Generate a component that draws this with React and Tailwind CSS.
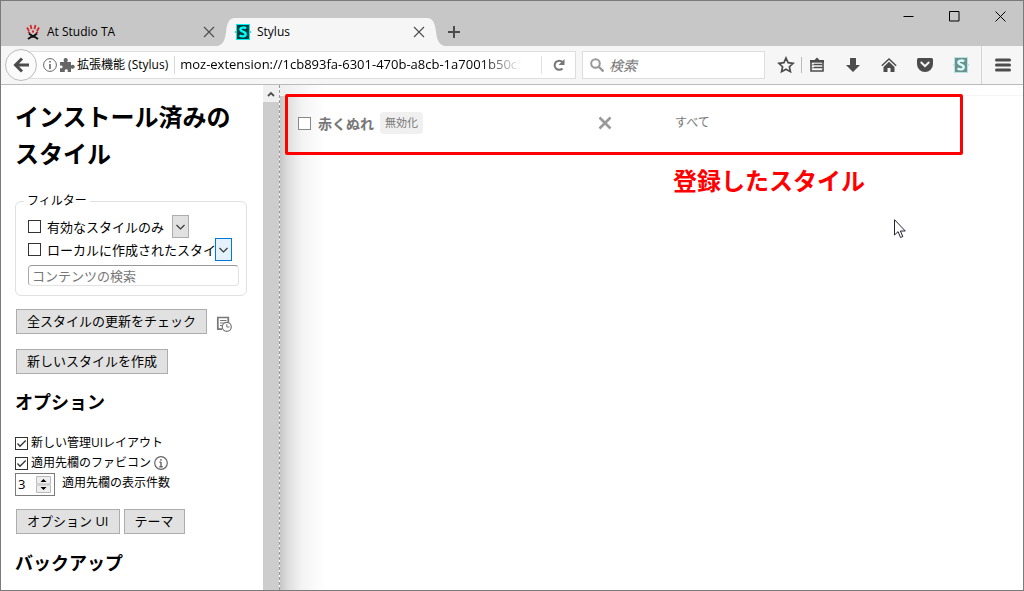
import React, { useState } from 'react'

const ICON = 'fill-none stroke-[#4c4c4c]'

const Tick = ({ id, checked, onChange, className = 'border-[#333]' }) => (
  <span className="grid shrink-0">
    <input
      id={id}
      type="checkbox"
      checked={checked}
      onChange={onChange}
      className={`col-start-1 row-start-1 size-[13px] appearance-none border bg-white ${className}`}
    />
    {checked && (
      <svg viewBox="0 0 13 13" className="pointer-events-none col-start-1 row-start-1 size-[13px] fill-none stroke-[#333]">
        <path d="M2.5 6.5 5 9.2 10.7 3.5" strokeWidth="1.3" />
      </svg>
    )}
  </span>
)

const MiniSelect = ({ label, options, className }) => (
  <span className="grid shrink-0">
    <select aria-label={label} className={`col-start-1 row-start-1 h-[23px] w-[17px] appearance-none border text-transparent ${className}`}>
      {options.map((o) => (
        <option key={o}>{o}</option>
      ))}
    </select>
    <svg viewBox="0 0 17 23" className="pointer-events-none col-start-1 row-start-1 h-[23px] w-[17px] fill-none stroke-[#333]">
      <path d="m4.5 10 4 4 4-4" strokeWidth="1.1" />
    </svg>
  </span>
)

const PushButton = ({ children }) => (
  <button type="button" className="h-[25px] border border-[#adadad] bg-[#e1e1e1] px-2.5 text-[13px] leading-[23px] whitespace-nowrap">
    {children}
  </button>
)

const StylusLogo = ({ faded }) => (
  <svg viewBox="0 0 16 16" className="size-4 shrink-0">
    <rect x="1" width="14" height="16" fill={faded ? '#b5e3df' : '#00efef'} />
    <path d="M0 7h16v2H0z" fill={faded ? '#b5e3df' : '#00efef'} />
    <rect x="2" y="1" width="12" height="14" fill={faded ? '#6f9290' : '#063c3c'} />
    <path
      d="M11 4.6C10 3.4 5.5 2.8 5.4 5.4 5.3 8 10.8 7.3 10.7 10.2 10.6 13 6 12.8 4.7 11.3"
      fill="none"
      stroke={faded ? '#d8fffb' : '#00ffff'}
      strokeWidth="2.4"
    />
  </svg>
)

const CloseIcon = () => (
  <svg viewBox="0 0 12 12" className="size-3 fill-none stroke-[#4c4c4c]">
    <path d="m1 1 10 10M11 1 1 11" strokeWidth="1.1" />
  </svg>
)

const TabStrip = () => (
  <div className="flex h-[45px] shrink-0 items-start justify-between bg-[#c7c7c7]">
    <div className="flex pt-[17px]">
      <div className="flex h-7 w-[216px] items-center pl-6">
        <svg viewBox="0 0 16 16" className="size-4 shrink-0 fill-none">
          <path d="M2 3.5 4 7M5.5 1 6.5 5M10.5 1 9.5 5M14 3.5 12 7M7 7.5h2M3 8l2 1M13 8l-2 1" stroke="#d3262b" strokeWidth="1.8" />
          <path d="m3 15 3-2 2-1 2 1 3 2M4 9.5l4 3 4-3" stroke="#111" strokeWidth="2" />
        </svg>
        <span className="ml-1.5 flex-1 text-[12px]">At Studio TA</span>
        <button type="button" aria-label="Close At Studio TA" className="pr-0.5">
          <CloseIcon />
        </button>
      </div>
      <div className="flex h-7">
        <svg viewBox="0 0 18 28" className="h-7 w-[18px] fill-[#f6f6f6]">
          <path d="M0 28C6 27 8 22 9 14 10 5 12 0 18 0V28Z" />
        </svg>
        <div className="flex w-[192px] items-center bg-[#f6f6f6]">
          <StylusLogo />
          <span className="ml-1.5 flex-1 text-[12px]">Stylus</span>
          <button type="button" aria-label="Close Stylus" className="pr-0.5">
            <CloseIcon />
          </button>
        </div>
        <svg viewBox="0 0 18 28" className="h-7 w-[18px] fill-[#f6f6f6]">
          <path d="M18 28C12 27 10 22 9 14 8 5 6 0 0 0V28Z" />
        </svg>
      </div>
      <button type="button" aria-label="New tab" className="ml-[3px]">
        <svg viewBox="0 0 12 12" className="size-3 fill-none stroke-[#4c4c4c]">
          <path d="M6 0v12M0 6h12" strokeWidth="2" />
        </svg>
      </button>
    </div>
    <div className="flex h-[30px] items-center gap-[35px] pr-[17px]">
      <button type="button" aria-label="Minimize">
        <svg viewBox="0 0 11 11" className="size-[11px] fill-none stroke-black"><path d="M.5 5.5h10" /></svg>
      </button>
      <button type="button" aria-label="Maximize">
        <svg viewBox="0 0 11 11" className="size-[11px] fill-none stroke-black"><path d="M.5.5h9.5v9.5H.5V.5z" /></svg>
      </button>
      <button type="button" aria-label="Close window">
        <svg viewBox="0 0 11 11" className="size-[11px] fill-none stroke-black"><path d="m.5.5 10 10M10.5.5l-10 10" /></svg>
      </button>
    </div>
  </div>
)

const NavBar = () => (
  <div className="flex h-[39px] shrink-0 items-center border-b border-[#bbb] bg-[#f6f6f6]">
    <button type="button" aria-label="Back" className="z-10 ml-1 grid size-8 shrink-0 place-items-center rounded-full border border-[#bbb] bg-[#fbfbfb]">
      <svg viewBox="0 0 16 16" className="size-4 fill-none stroke-[#4c4c4c]">
        <path d="M9 1.5 2.5 8 9 14.5M3 8h13" strokeWidth="3" />
      </svg>
    </button>
    <div className="-ml-2.5 flex h-7 min-w-0 flex-1 items-center border border-[#dedede] bg-white pl-[15px]">
      <svg viewBox="0 0 14 14" className="size-3.5 shrink-0 fill-none stroke-[#666]">
        <circle cx="7" cy="7" r="6.4" />
        <path d="M7 6v5M7 3v1.6" strokeWidth="1.6" />
      </svg>
      <svg viewBox="0 0 16 16" className="ml-0.5 size-4 shrink-0 fill-[#666]">
        <path d="M1 5h4.2C4 3 4.8 1 6.7 1S9.400 3 8.200 5H12v3.300c2-1.200 3.700-.4 3.700 1.400S14 12.300 12 11.200V15H8.500c.8-1.800.2-2.800-1.200-2.800S5.200 13.200 6 15H1v-4c1.600.8 2.600.1 2.600-1.100S2.500 7.900 1 8.700Z" />
      </svg>
      <span className="ml-0.5 shrink-0 text-[12px] whitespace-nowrap">拡張機能 (Stylus)</span>
      <span className="ml-1.5 h-[18px] w-px shrink-0 bg-[#d8d8d8]" />
      <input
        aria-label="URL"
        defaultValue="moz-extension://1cb893fa-6301-470b-a8cb-1a7001b50c5e/manage.html"
        className="ml-[5px] min-w-0 flex-1 bg-transparent text-[13px] [mask-image:linear-gradient(to_right,#000_calc(100%-40px),transparent)]"
      />
      <span className="ml-5 h-[18px] w-px shrink-0 bg-[#dedede]" />
      <button type="button" aria-label="Reload" className="grid w-[33px] shrink-0 place-items-center">
        <svg viewBox="0 0 14 14" className="size-3.5 fill-none stroke-[#777]">
          <path d="M10.500 10.500A4.600 4.600 0 1 1 10.500 4" strokeWidth="2" />
          <path d="M12.500 1v6H6.500Z" className="fill-[#777] stroke-none" />
        </svg>
      </button>
    </div>
    <div className="ml-1.5 flex h-7 w-[183px] shrink-0 items-center border border-[#dedede] bg-white pl-[7px]">
      <svg viewBox="0 0 14 14" className="size-3.5 shrink-0 fill-none stroke-[#999]">
        <circle cx="5.500" cy="5.500" r="4.300" strokeWidth="2" />
        <path d="m8.500 8.500 5 5" strokeWidth="2.400" />
      </svg>
      <input aria-label="Search" placeholder="検索" className="ml-[5px] w-full min-w-0 text-[14px] italic placeholder:text-[#777]" />
    </div>
    <div className="flex shrink-0 items-center pl-3">
      <button type="button" aria-label="Bookmark">
        <svg viewBox="0 0 18 18" className={`size-[18px] ${ICON}`}>
          <path d="m9 2 2.100 4.700 5 .6-3.700 3.400 1 5L9 13.200l-4.400 2.500 1-5L1.900 7.300l5-.6Z" strokeWidth="1.700" />
        </svg>
      </button>
      <span className="ml-1.5 h-4 w-px bg-[#bbb]" />
      <button type="button" aria-label="Bookmarks menu" className="ml-[7px]">
        <svg viewBox="0 0 16 16" className={`size-4 ${ICON}`}>
          <path d="M2 4.500h12V14H2zM5 7.500h8M5 10.500h8" strokeWidth="1.600" />
          <path d="M1 3h4.500L8 .5 10.500 3H15v2.500H1zM3.500 7h1v1.500h-1zm0 3h1v1.500h-1z" className="fill-[#4c4c4c] stroke-none" />
        </svg>
      </button>
      <button type="button" aria-label="Downloads" className="ml-5">
        <svg viewBox="0 0 16 16" className="size-4 fill-[#4c4c4c]"><path d="M5 1.500Q5 1 5.500 1h5q.5 0 .5.5V8h4L8 15 1 8h4Z" /></svg>
      </button>
      <button type="button" aria-label="Home" className="ml-5">
        <svg viewBox="0 0 16 16" className="size-4 fill-[#4c4c4c]">
          <path d="M8 4.800 13.500 10v5H9.500v-4h-3v4h-4v-5Z" />
          <path d="M.8 8.800 8 2l7.200 6.800" className={ICON} strokeWidth="1.500" />
        </svg>
      </button>
      <button type="button" aria-label="Pocket" className="ml-5">
        <svg viewBox="0 0 16 16" className="size-4 fill-[#4c4c4c]">
          <path d="M1.500 1h13q1.500 0 1.500 1.500V7a8 8 0 0 1-16 0V2.500Q0 1 1.500 1Z" />
          <path d="m4.300 5.500 3.700 3.700 3.700-3.700" className="fill-none stroke-[#f6f6f6]" strokeWidth="2" strokeLinecap="round" />
        </svg>
      </button>
      <button type="button" aria-label="Stylus" className="ml-5">
        <StylusLogo faded />
      </button>
      <span className="ml-3 h-[38px] w-px bg-[#d4d4d4]" />
      <button type="button" aria-label="Menu" className="mr-3 ml-[13px]">
        <svg viewBox="0 0 16 14" className={`h-3.5 w-4 ${ICON}`}>
          <path d="M1.500 2h13M1.500 7h13M1.500 12h13" strokeWidth="3" strokeLinecap="round" />
        </svg>
      </button>
    </div>
  </div>
)

const Sidebar = () => {
  const [enabledOnly, setEnabledOnly] = useState(false)
  const [localOnly, setLocalOnly] = useState(false)
  const [newLayout, setNewLayout] = useState(true)
  const [favicons, setFavicons] = useState(true)

  return (
    <aside className="w-[262px] shrink-0 overflow-hidden px-3.5 pt-[13px]">
      <h1 className="text-[24px] leading-[37px] font-bold">インストール済みのスタイル</h1>

      <fieldset className="mt-5 mr-0.5 rounded-md border border-[#e0e0e0] pr-[7px] pb-[9px] pl-3">
        <legend className="-ml-1 px-[3px] text-[12px] leading-[18px]">フィルター</legend>
        <div className="mt-[5px] flex h-[23px] items-center">
          <Tick id="enabled" checked={enabledOnly} onChange={(e) => setEnabledOnly(e.target.checked)} />
          <label htmlFor="enabled" className="ml-1.5 w-[125px] text-[13px] leading-5 whitespace-nowrap">有効なスタイルのみ</label>
          <MiniSelect label="有効状態" options={['有効なスタイルのみ', '無効なスタイルのみ']} className="border-[#adadad] bg-[#e1e1e1]" />
        </div>
        <div className="flex h-[23px] items-center">
          <Tick id="local" checked={localOnly} onChange={(e) => setLocalOnly(e.target.checked)} />
          <label htmlFor="local" className="ml-1.5 w-[168px] overflow-hidden text-[13px] leading-5 whitespace-nowrap">ローカルに作成されたスタイルのみ</label>
          <MiniSelect label="作成元" options={['ローカルに作成されたスタイルのみ', '外部のスタイルのみ']} className="border-[#0078d7] bg-[#e5f1fb]" />
        </div>
        <input
          aria-label="コンテンツの検索"
          placeholder="コンテンツの検索"
          className="mt-1 block h-[21px] w-full min-w-0 rounded-[4px] border border-[#e3e3e3] border-t-[#999] border-l-[#aaa] px-[3px] text-[13px] placeholder:text-[#777]"
        />
      </fieldset>

      <div className="mt-[13px] ml-px flex items-center">
        <PushButton>全スタイルの更新をチェック</PushButton>
        <button type="button" aria-label="更新履歴" className="mt-1 ml-[9px]">
          <svg viewBox="0 0 16 16" className="size-4 fill-none stroke-[#777]">
            <path d="M6 13.200H1.800V1.500h10.500V6" strokeWidth="1.700" />
            <path d="M4 4.500h6.500M4 7h4.500M4 9.500h3" />
            <circle cx="10.800" cy="10.800" r="4.500" className="fill-white" strokeWidth="1.200" />
            <path d="M10.800 8v3h2.700" />
          </svg>
        </button>
      </div>
      <div className="mt-3.5 ml-px">
        <PushButton>新しいスタイルを作成</PushButton>
      </div>

      <h2 className="mt-[15px] text-[18px] leading-[27px] font-bold">オプション</h2>
      <div className="mt-[17px] flex h-5 items-center">
        <Tick id="layout" checked={newLayout} onChange={(e) => setNewLayout(e.target.checked)} />
        <label htmlFor="layout" className="ml-[3px] text-[12px] leading-5">新しい管理UIレイアウト</label>
      </div>
      <div className="flex h-5 items-center">
        <Tick id="favicons" checked={favicons} onChange={(e) => setFavicons(e.target.checked)} />
        <label htmlFor="favicons" className="ml-[3px] text-[12px] leading-5">適用先欄のファビコン</label>
        <button type="button" aria-label="情報" className="ml-[3px]">
          <svg viewBox="0 0 14 14" className="size-3.5 fill-none stroke-[#666]">
            <circle cx="7" cy="7" r="6.300" strokeWidth="1.200" />
            <path d="M7 6v5M5.500 6.300H7M5.300 10.800h3.400M7 3v1.700" strokeWidth="1.400" />
          </svg>
        </button>
      </div>
      <div className="flex items-start">
        <span className="flex h-[23px] w-10 items-center border border-[#7a7a7a] bg-white pr-[3px]">
          <input
            id="targets"
            type="number"
            defaultValue="3"
            className="w-full min-w-0 appearance-none pl-0.5 text-[13px] [&::-webkit-inner-spin-button]:appearance-none"
          />
          <svg viewBox="0 0 15 17" className="h-[17px] w-[15px] shrink-0">
            <path d="M.5.5h14v7.500H.5zM.5 9h14v7.500H.5z" fill="#eee" stroke="#bbb" />
            <path d="m4.500 6 3-3 3 3zM4.500 11l3 3 3-3z" />
          </svg>
        </span>
        <label htmlFor="targets" className="ml-[7px] text-[12px] leading-5">適用先欄の表示件数</label>
      </div>
      <div className="mt-[13px] ml-px flex gap-1">
        <PushButton>オプション UI</PushButton>
        <PushButton>テーマ</PushButton>
      </div>

      <h2 className="mt-4 text-[18px] leading-[27px] font-bold">バックアップ</h2>
    </aside>
  )
}

const StyleList = () => {
  const [enabled, setEnabled] = useState(false)

  return (
    <main className="min-w-0 flex-1 bg-[linear-gradient(to_right,#c6c6c6,#dedede_8px,#f4f4f4_22px,#fff_46px)]">
      <div className="h-[11px] border-b border-[#f5f5f5] bg-[linear-gradient(to_right,#eeeeee,#fff_46px)]" />
      <div className="relative -mt-0.5 mr-[60px] ml-[5px] flex h-[61px] items-center rounded-[2px] border-[3px] border-[#ff0000] pb-[3px] pl-2.5 text-[#777]">
        <div className="flex w-[300px] items-center">
          <Tick id="style-1" checked={enabled} onChange={(e) => setEnabled(e.target.checked)} className="border-[#888]" />
          <label htmlFor="style-1" className="ml-[7px] text-[14px] font-bold">赤くぬれ</label>
          <span className="ml-1.5 rounded-[4px] bg-[#f0f0f0] px-[5px] text-[11px] leading-[22px]">無効化</span>
        </div>
        <button type="button" aria-label="削除">
          <svg viewBox="0 0 14 14" className="size-3.5 fill-none stroke-[#999]">
            <path d="m1.500 1.500 11 11M12.500 1.500l-11 11" strokeWidth="2.600" />
          </svg>
        </button>
        <span className="ml-[63px] text-[12px]">すべて</span>
      </div>
      <p className="mt-2 ml-[393px] text-[24px] leading-9 font-bold text-[#ff0000]">登録したスタイル</p>
      <svg viewBox="0 0 12 20" className="mt-5 ml-[614px] h-5 w-3 fill-white stroke-[#223]">
        <path d="M.5.7V16l3.600-3.400L6.500 18.500l2.300-1-2.400-5.500h4.900Z" />
      </svg>
    </main>
  )
}

const App = () => (
  <div className="flex h-screen flex-col overflow-hidden border border-[#7a7a7a] bg-white font-['Open_Sans','Noto_Sans_CJK_JP',sans-serif] text-black">
    <TabStrip />
    <NavBar />
    <div className="flex min-h-0 flex-1">
      <Sidebar />
      <div className="flex w-4 shrink-0 flex-col bg-[#cdcdcd]">
        <button type="button" aria-label="Scroll up" className="grid h-[17px] place-items-center bg-[#f0f0f0]">
          <svg viewBox="0 0 8 6" className="h-1.5 w-2 fill-none stroke-[#505050]">
            <path d="m1 5 3-3 3 3" strokeWidth="1.800" />
          </svg>
        </button>
      </div>
      <div className="shrink-0 border-l border-dashed border-[#999]" />
      <StyleList />
    </div>
  </div>
)

export default App
